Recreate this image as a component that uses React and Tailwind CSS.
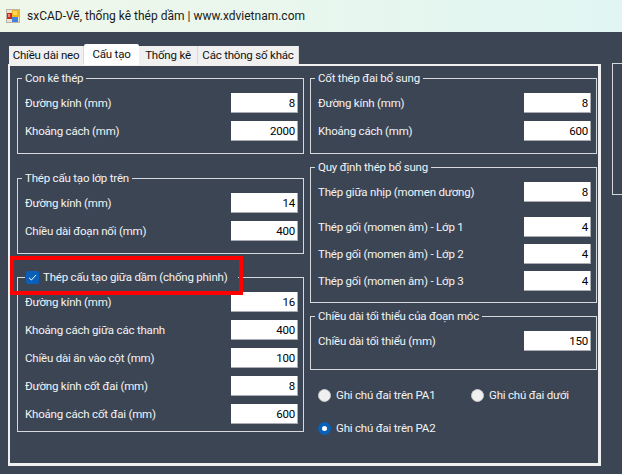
import React from "react";

const font = "font-['Roboto','Liberation_Sans',sans-serif]";

const Field = ({ label, value, className = "" }) => (
  <div className={`flex items-center justify-between pl-[7px] pr-[5px] ${className}`}>
    <span className="h-[20px] text-[11.5px] tracking-[-0.2px] leading-[21px] text-[#f2f4f6] whitespace-nowrap">{label}</span>
    <div className="w-[67px] h-[20px] bg-white border-r border-b border-[#a9adb3] pr-[2px] text-right text-[11.5px] tracking-[-0.2px] leading-[20px] text-black">
      {value}
    </div>
  </div>
);

const Group = ({ title, className = "", children }) => (
  <div className={`border border-[#d5d8dc] ${className}`}>
    <div className="w-fit -mt-[9px] ml-[4px] px-[3px] bg-[#3c4554] text-[11.5px] tracking-[-0.2px] leading-[16px] text-[#f2f4f6] whitespace-nowrap">
      {title}
    </div>
    {children}
  </div>
);

const Radio = ({ label, checked }) => (
  <div className="flex items-center gap-[5px]">
    {checked ? (
      <span className="w-[13px] h-[13px] rounded-full bg-[#0a5fb8] flex items-center justify-center">
        <span className="w-[5px] h-[5px] rounded-full bg-white" />
      </span>
    ) : (
      <span className="w-[13px] h-[13px] rounded-full bg-[#f0f0f0] border border-[#c8c8c8]" />
    )}
    <span className="text-[11.5px] tracking-[-0.2px] leading-[16px] text-[#f2f4f6] whitespace-nowrap">{label}</span>
  </div>
);

const tabs = [
  { name: "Chiều dài neo", w: "w-[75px]" },
  { name: "Cấu tạo", w: "w-[55px]", active: true },
  { name: "Thống kê", w: "w-[59px]" },
  { name: "Các thông số khác", w: "w-[101px]" },
];

export default function App() {
  return (
    <div className={`w-[622px] h-[474px] overflow-hidden bg-[#3c4554] ${font}`}>
      {/* title bar */}
      <div className="h-[32px] flex items-center pl-[6px] gap-[7px] bg-gradient-to-r from-[#eff7e9] to-[#e1f6f3]">
        <svg width="14" height="14" viewBox="0 0 14 14">
          <rect x="0" y="0" width="14" height="14" fill="#b9b5a6" />
          <rect x="1" y="1" width="12" height="12" fill="#e6e3d6" />
          <rect x="1" y="4" width="5" height="6" fill="#c92a22" />
          <rect x="2" y="5" width="2" height="3" fill="#ee8a78" />
          <rect x="6" y="1" width="7" height="7" fill="#f2b61e" />
          <rect x="7" y="2" width="4" height="4" fill="#fbd75a" />
          <rect x="6" y="8" width="6" height="5" fill="#3f83dd" />
        </svg>
        <span className="text-[12px] text-[#1a1a1a] whitespace-nowrap">sxCAD-Vẽ, thống kê thép dầm | www.xdvietnam.com</span>
      </div>

      {/* tab strip */}
      <div className="h-[32px] flex items-end pl-[9px]">
        {tabs.map((t) =>
          t.active ? (
            <div key={t.name} className={`${t.w} h-[21px] -mb-[1px] relative bg-white rounded-t-[2px] text-center text-[11.5px] tracking-[-0.2px] leading-[20px] text-[#111]`}>
              {t.name}
            </div>
          ) : (
            <div key={t.name} className={`${t.w} h-[18px] bg-[#f0f0f0] border-r border-[#d9d9d9] text-center text-[11.5px] tracking-[-0.2px] leading-[19px] text-[#111] whitespace-nowrap`}>
              {t.name}
            </div>
          )
        )}
      </div>

      <div className="flex">
        {/* main panel */}
        <div className="ml-[8px] w-[599px] h-[402px] border-[2px] border-r-[3px] border-b-[3px] border-[#f0f0f0] pt-[12px] pl-[7px] grid grid-cols-[287px_287px] gap-x-[6px] items-start">
          <div className="relative">
            <Group title="Con kê thép" className="h-[76px]">
              <div className="mt-[7px] flex flex-col gap-[8px]">
                <Field label="Đường kính (mm)" value="8" />
                <Field label="Khoảng cách (mm)" value="2000" />
              </div>
            </Group>
            <Group title="Thép cấu tạo lớp trên" className="h-[76px] mt-[24px]">
              <div className="mt-[7px] flex flex-col gap-[8px]">
                <Field label="Đường kính (mm)" value="14" />
                <Field label="Chiều dài đoạn nối (mm)" value="400" />
              </div>
            </Group>
            <div className="h-[155px] mt-[23px] border border-[#d5d8dc]">
              <div className="w-fit -mt-[9px] ml-[7px] pl-[1px] pr-[10px] bg-[#3c4554] flex items-center gap-[4px]">
                <span className="w-[13px] h-[13px] rounded-[2px] bg-[#0a5fb8] flex items-center justify-center">
                  <svg width="9" height="9" viewBox="0 0 9 9" fill="none">
                    <path d="M1 4.8 L3.4 7 L8 2" stroke="#fff" strokeWidth="1" />
                  </svg>
                </span>
                <span className="text-[11.5px] tracking-[-0.2px] leading-[16px] text-[#f2f4f6] whitespace-nowrap">Thép cấu tạo giữa dầm (chống phình)</span>
              </div>
              <div className="mt-[7px] flex flex-col gap-[8px]">
                <Field label="Đường kính (mm)" value="16" />
                <Field label="Khoảng cách giữa các thanh" value="400" />
                <Field label="Chiều dài ăn vào cột (mm)" value="100" />
                <Field label="Đường kính cốt đai (mm)" value="8" />
                <Field label="Khoảng cách cốt đai (mm)" value="600" />
              </div>
            </div>
            {/* red highlight drawn over the screenshot */}
            <div className="absolute left-[-7px] top-[178px] w-[233px] h-[39px] border-[4px] border-[#ff0000]" />
          </div>

          <div>
            <Group title="Cốt thép đai bổ sung" className="h-[76px]">
              <div className="mt-[7px] flex flex-col gap-[8px]">
                <Field label="Đường kính (mm)" value="8" />
                <Field label="Khoảng cách (mm)" value="600" />
              </div>
            </Group>
            <Group title="Quy định thép bổ sung" className="h-[136px] mt-[13px]">
              <div className="mt-[7px]">
                <Field label="Thép giữa nhịp (momen dương)" value="8" />
                <div className="mt-[15px] flex flex-col gap-[7px]">
                  <Field label="Thép gối (momen âm) - Lớp 1" value="4" />
                  <Field label="Thép gối (momen âm) - Lớp 2" value="4" />
                  <Field label="Thép gối (momen âm) - Lớp 3" value="4" />
                </div>
              </div>
            </Group>
            <Group title="Chiều dài tối thiểu của đoạn móc" className="h-[54px] mt-[13px]">
              <div className="mt-[7px]">
                <Field label="Chiều dài tối thiểu (mm)" value="150" />
              </div>
            </Group>
            <div className="mt-[17px] ml-[8px] grid grid-cols-[153px_auto] gap-y-[17px]">
              <Radio label="Ghi chú đai trên PA1" />
              <Radio label="Ghi chú đai dưới" />
              <Radio label="Ghi chú đai trên PA2" checked />
            </div>
          </div>
        </div>

        {/* next panel, cut off by the window edge */}
        <div className="ml-[11px] -mt-[1px] w-[10px] h-[132px] border-l border-t border-b border-[#d5d8dc]" />
      </div>
    </div>
  );
}
